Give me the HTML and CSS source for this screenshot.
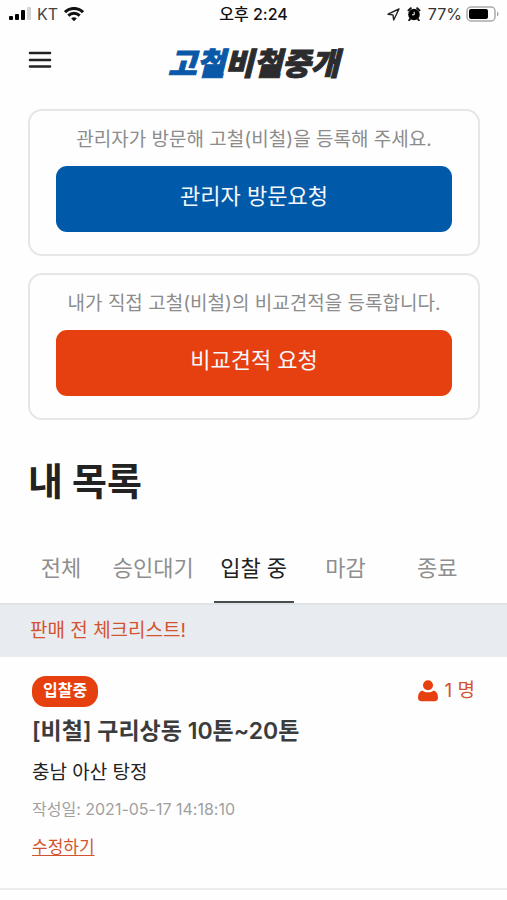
FILE: index.html
```html
<!DOCTYPE html>
<html lang="ko">
<head>
<meta charset="utf-8">
<meta name="viewport" content="width=device-width, initial-scale=1">
<title>고철비철중개</title>
<link rel="stylesheet" href="styles.css">
</head>
<body>
<div class="status">
  <div class="status-side">
    <svg width="23" height="14" viewBox="0 0 23 14" aria-hidden="true">
      <rect x="1" y="9" width="4" height="4" rx="1"/>
      <rect x="7" y="7" width="4" height="6" rx="1"/>
      <rect x="13" y="3" width="4" height="10" rx="1"/>
      <rect x="19" y="0" width="4" height="13" rx="1" fill="#d4d4d4"/>
    </svg>
    <span class="carrier">KT</span>
    <svg class="wifi" width="20" height="15" viewBox="0 0 20 15" fill="none" stroke="#111" stroke-width="3" aria-hidden="true">
      <path d="M1 5.200C6 .2 14 .2 19 5.200"/>
      <path d="M4.300 8.700c3.300-3.200 8.100-3.200 11.400 0"/>
      <path d="M7.200 11.400c1.700-1.500 3.900-1.500 5.600 0L10 14.300z" fill="#111" stroke="none"/>
    </svg>
  </div>
  <div class="clock">오후 2:24</div>
  <div class="status-side status-right">
    <svg width="13" height="13" viewBox="0 0 13 13" fill="none" stroke="#222" stroke-width="1.400" stroke-linejoin="round" aria-hidden="true">
      <path d="M12 1 1 6.200l5 .7.700 5.100z"/>
    </svg>
    <svg class="alarm" width="14" height="14" viewBox="0 0 14 14" aria-hidden="true">
      <circle cx="7" cy="7.500" r="5.800"/>
      <path d="M1.500 3.400 3.800 1.200M12.500 3.400 10.200 1.200M3 12l-.8 1.200M11 12l.8 1.200" stroke="#111" stroke-width="2" stroke-linecap="round"/>
      <path d="M7.200 4.800v3H5" fill="none" stroke="#fff" stroke-width="1"/>
    </svg>
    <span class="percent">77%</span>
    <svg width="33" height="16" viewBox="0 0 33 16" aria-hidden="true">
      <rect x="1" y="1" width="28" height="14" rx="4" fill="none" stroke="#aaa" stroke-width="1.500"/>
      <rect x="3" y="3" width="19" height="10" rx="2"/>
      <path d="M31 5.500c2 .8 2 4.200 0 5z" fill="#aaa"/>
    </svg>
  </div>
</div>

<header class="header">
  <button class="menu" type="button" aria-label="메뉴">
    <svg width="24" height="18" viewBox="0 0 24 18" stroke="#222" stroke-width="2.600" stroke-linecap="round" aria-hidden="true">
      <path d="M2 2h20M2 9h20M2 15.500h20"/>
    </svg>
  </button>
  <a class="logo" href="#"><span class="logo-blue">고철</span>비철중개</a>
</header>

<main>
  <section class="cards">
    <div class="card">
      <p class="card-text">관리자가 방문해 고철(비철)을 등록해 주세요.</p>
      <button class="btn btn-blue" type="button">관리자 방문요청</button>
    </div>
    <div class="card">
      <p class="card-text">내가 직접 고철(비철)의 비교견적을 등록합니다.</p>
      <button class="btn btn-orange" type="button">비교견적 요청</button>
    </div>
  </section>

  <h1 class="title">내 목록</h1>

  <nav class="tabs">
    <a class="tab" href="#">전체</a>
    <a class="tab" href="#">승인대기</a>
    <a class="tab active" href="#" aria-current="page">입찰 중</a>
    <a class="tab" href="#">마감</a>
    <a class="tab" href="#">종료</a>
  </nav>

  <a class="notice" href="#">판매 전 체크리스트!</a>

  <article class="item">
    <div class="item-top">
      <span class="badge">입찰중</span>
      <span class="people">
        <svg width="20" height="22" viewBox="0 0 20 22" aria-hidden="true">
          <circle cx="10" cy="5.200" r="5"/>
          <path d="M4.200 10.400c3.200 2.500 8.400 2.500 11.600 0 2.700.8 4.200 3.400 4.200 7.200 0 2.300-1.100 3.600-3 3.600H3c-1.900 0-3-1.300-3-3.600 0-3.800 1.500-6.400 4.200-7.200z"/>
        </svg>
        1 명
      </span>
    </div>
    <h2 class="item-title">[비철] 구리상동 10톤~20톤</h2>
    <p class="place">충남 아산 탕정</p>
    <p class="date">작성일: 2021-05-17 14:18:10</p>
    <a class="edit" href="#">수정하기</a>
  </article>
</main>
</body>
</html>
```
FILE: styles.css
```css
* {
  box-sizing: border-box;
}

body {
  margin: 0;
  background: #fefefe;
  color: #222;
  font-family: Inter, "Noto Sans CJK KR", sans-serif;
}

p,
h1,
h2 {
  margin: 0;
}

a {
  color: inherit;
  text-decoration: none;
}

button {
  border: 0;
  padding: 0;
  font: inherit;
  cursor: pointer;
}

.status {
  display: grid;
  grid-template-columns: 1fr auto 1fr;
  align-items: center;
  height: 28px;
  padding: 0 8px;
  font-size: 16px;
  line-height: 20px;
}

.status-side {
  display: flex;
  align-items: center;
}

.status-right {
  justify-content: flex-end;
}

.carrier {
  margin: 0 6px;
  color: #444;
}

.clock {
  color: #111;
  font-weight: 500;
}

.alarm {
  margin: 0 7px;
}

.percent {
  margin-right: 4px;
  color: #333;
}

.header {
  display: grid;
  grid-template-columns: 1fr auto 1fr;
  align-items: center;
  height: 72px;
  padding: 0 28px;
}

.menu {
  justify-self: start;
  display: flex;
  margin-bottom: 8px;
  background: none;
}

.logo {
  color: #2c2c2e;
  font-size: 31px;
  font-style: italic;
  font-weight: 900;
  line-height: 40px;
  -webkit-text-stroke: 1px currentColor;
}

.logo-blue {
  color: #0a58a8;
}

.cards {
  display: grid;
  gap: 17px;
  padding: 9px 27px 0 28px;
}

.card {
  padding: 13px 26px 22px;
  border: 2px solid #e6e6e6;
  border-radius: 14px;
  text-align: center;
}

.card-text {
  margin-bottom: 10px;
  color: #8c8c8c;
  font-size: 19px;
  line-height: 32px;
  white-space: nowrap;
}

.btn {
  display: block;
  width: 100%;
  padding: 14px 0 20px;
  border-radius: 11px;
  color: #f4f8fc;
  font-size: 22px;
  line-height: 32px;
}

.btn-blue {
  background: #015aa9;
}

.btn-orange {
  background: #e64010;
}

.title {
  padding: 35px 28px 0;
  color: #222;
  font-size: 38px;
  font-weight: 700;
  line-height: 52px;
}

.tabs {
  display: flex;
  gap: 12px;
  margin-top: 36px;
  padding: 0 30px 0 21px;
  border-bottom: 2px solid #dde2e4;
}

.tab {
  flex: 1 0 0;
  padding: 10px 0 18px;
  border-bottom: 2px solid transparent;
  color: #8e8e8e;
  font-size: 22px;
  line-height: 30px;
  text-align: center;
  white-space: nowrap;
}

.tab.active {
  margin-left: 8px;
  border-color: #4a4d50;
  color: #222;
}

.notice {
  display: block;
  padding: 10px 30px;
  background: #e8ecf0;
  color: #d4532f;
  font-size: 19px;
  line-height: 32px;
}

.item {
  padding: 16px 32px 27px;
  border-bottom: 2px solid #ececec;
}

.item-top {
  display: flex;
  align-items: center;
  justify-content: space-between;
}

.badge {
  padding: 2px 11px 5px;
  border-radius: 14px;
  background: #e64010;
  color: #fff;
  font-size: 16px;
  font-weight: 700;
  line-height: 24px;
}

.people {
  display: flex;
  align-items: center;
  gap: 6px;
  color: #d4532f;
  font-size: 19px;
  line-height: 36px;
}

.people svg {
  fill: #e64010;
}

.item-title {
  margin-top: 6px;
  color: #3c3c3c;
  font-size: 23px;
  font-weight: 600;
  line-height: 32px;
}

.place {
  margin-top: 12px;
  color: #222;
  font-size: 19px;
  line-height: 28px;
}

.date {
  margin-top: 10px;
  color: #a0a0a0;
  font-size: 16px;
  line-height: 24px;
}

.edit {
  display: inline-block;
  margin-top: 12px;
  color: #d4532f;
  font-size: 17px;
  line-height: 28px;
  text-decoration: underline;
  text-underline-offset: 2px;
}
```
